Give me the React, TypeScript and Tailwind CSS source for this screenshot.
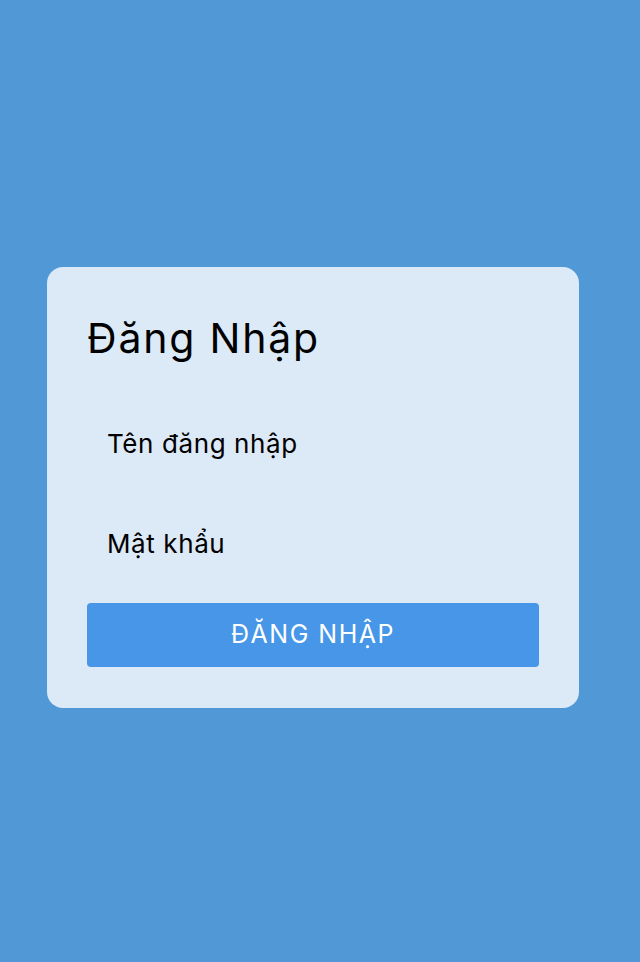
import React from 'react';

const App: React.FC = () => {
    return (
        <div
            className="min-h-screen w-full bg-[#5198d6] flex items-center pt-[13px]"
            style={{ fontFamily: 'Inter, "Noto Sans", sans-serif' }}
        >
            <form
                className="ml-[47px] w-[532px] h-[441px] rounded-2xl bg-[#dce9f6] px-10 pt-10 pb-10 flex flex-col"
                onSubmit={(e) => e.preventDefault()}
            >
                <h1 className="text-[41px] leading-[62px] tracking-[1.8px] text-black font-normal mb-[34px]">Đăng Nhập</h1>
                <input
                    type="text"
                    placeholder="Tên đăng nhập"
                    className="h-20 w-full bg-transparent px-5 text-[26px] tracking-[0.6px] text-black placeholder:text-black outline-none mb-5"
                />
                <input
                    type="password"
                    placeholder="Mật khẩu"
                    className="h-20 w-full bg-transparent px-5 text-[26px] tracking-[0.6px] text-black placeholder:text-black outline-none mb-5"
                />
                <button
                    type="submit"
                    className="h-16 w-full rounded bg-[#4796e8] text-white text-[25px] tracking-[1.5px] uppercase"
                >
                    Đăng Nhập
                </button>
            </form>
        </div>
    );
};

export default App;
